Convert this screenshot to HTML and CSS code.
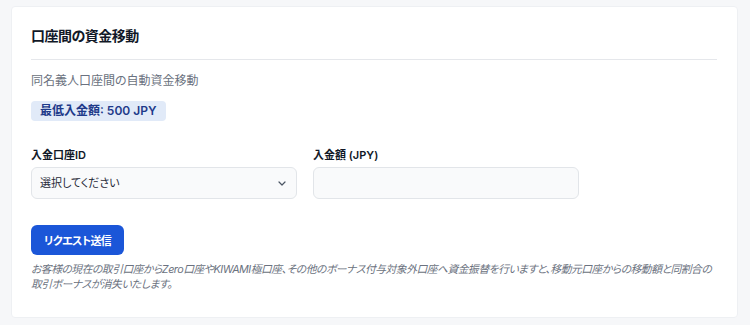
FILE: index.html
```html
<!DOCTYPE html>
<html lang="ja">
<head>
    <meta charset="UTF-8">
    <meta name="viewport" content="width=device-width, initial-scale=1.0">
    <title>口座間の資金移動</title>
    <link rel="stylesheet" href="styles.css">
</head>
<body>

    <div class="card">
        <h2 class="card-title">口座間の資金移動</h2>

        <p class="subtitle">同名義人口座間の自動資金移動</p>
        <span class="badge">最低入金額: 500 JPY</span>

        <!-- 入力欄 -->
        <div class="form-row">
            <div class="input-group">
                <label for="account">入金口座ID</label>
                <div class="select-wrap">
                    <select id="account">
                        <option>選択してください</option>
                    </select>
                    <svg class="chevron" width="8" height="5" viewBox="0 0 8 5">
                        <path d="M1 1l3 3 3-3" fill="none" stroke="#4b5563" stroke-width="1.2" stroke-linecap="round" stroke-linejoin="round"/>
                    </svg>
                </div>
            </div>
            <div class="input-group">
                <label for="amount">入金額 (JPY)</label>
                <input type="number" id="amount">
            </div>
        </div>

        <button class="submit-btn">リクエスト送信</button>
        <p class="note">お客様の現在の取引口座からZero口座やKIWAMI極口座、その他のボーナス付与対象外口座へ資金振替を行いますと、移動元口座からの移動額と同割合の<br>取引ボーナスが消失いたします。</p>
    </div>

</body>
</html>
```

FILE: styles.css
```css
body {
    font-family: 'Inter', 'Noto Sans CJK JP', sans-serif;
    font-feature-settings: "palt";
    background: #f6f7f9;
    margin: 0;
    padding: 6px 12px 0 11px;
    color: #1f2937;
}
.card {
    background: white;
    border: 1px solid #eef0f3;
    border-radius: 4px;
    padding: 17px 20px 25px 19px;
}
.card-title {
    font-size: 14px;
    font-weight: bold;
    line-height: 24px;
    letter-spacing: -0.5px;
    margin: 0;
    padding-bottom: 11px;
    border-bottom: 1px solid #e5e7eb;
    color: #111827;
}
.subtitle {
    font-size: 12px;
    line-height: 20px;
    color: #6b7280;
    margin: 11px 0 8px;
}
.badge {
    display: inline-block;
    background: #e1eaf8;
    color: #1e3a8a;
    font-size: 12px;
    font-weight: 600;
    line-height: 20px;
    padding: 0 9px;
    border-radius: 4px;
}
.form-row {
    display: flex;
    gap: 16px;
    margin-top: 25px;
}
.input-group {
    display: flex;
    flex-direction: column;
    width: 266px;
}
.input-group label {
    font-size: 11px;
    font-weight: 600;
    line-height: 18px;
    margin-bottom: 3px;
    color: #111827;
}
.select-wrap {
    position: relative;
}
.input-group select,
.input-group input {
    box-sizing: border-box;
    width: 100%;
    height: 32px;
    background: #f9fafb;
    border: 1px solid #e2e5e9;
    border-radius: 6px;
    font-family: inherit;
    font-feature-settings: "palt";
    font-size: 11px;
    color: #1f2937;
    padding: 0 8px;
    appearance: none;
    -webkit-appearance: none;
    outline: none;
}
.chevron {
    position: absolute;
    right: 11px;
    top: 14px;
}
.submit-btn {
    display: block;
    margin-top: 26px;
    height: 30px;
    padding: 0 13px;
    background: #1b56d8;
    color: white;
    border: none;
    border-radius: 6px;
    font-family: inherit;
    font-feature-settings: "palt";
    font-size: 11px;
    font-weight: 600;
    letter-spacing: -0.6px;
    cursor: pointer;
}
.submit-btn:hover {
    background: #1745b0;
}
.note {
    font-size: 10.8px;
    font-style: italic;
    line-height: 15px;
    letter-spacing: -0.5px;
    color: #6b7280;
    margin: 7px 0 0;
}
```
